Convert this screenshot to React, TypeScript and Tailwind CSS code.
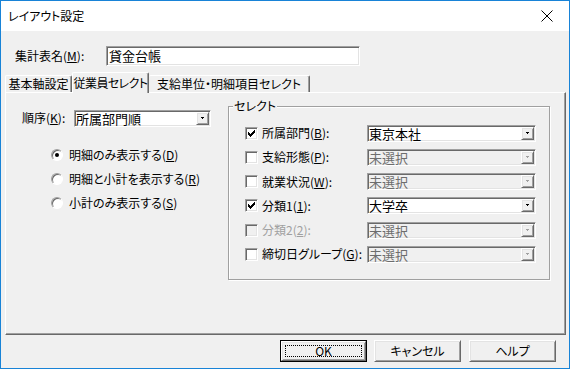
import React from 'react';

const font = "font-['MS_UI_Gothic','Noto_Sans_CJK_JP',sans-serif] [font-feature-settings:'palt']";

const sunken =
  'border border-t-[#a0a0a0] border-l-[#a0a0a0] border-r-white border-b-white shadow-[inset_1px_1px_0_#696969,inset_-1px_-1px_0_#e3e3e3]';
const raised =
  'border border-t-white border-l-white border-r-[#696969] border-b-[#696969] shadow-[inset_1px_1px_0_#e3e3e3,inset_-1px_-1px_0_#a0a0a0]';

const Mn: React.FC<{ k: string; colon?: boolean }> = ({ k, colon = true }) => (
  <>
    (<u className="underline-offset-1">{k}</u>){colon ? ':' : ''}
  </>
);

const Combo: React.FC<{ value: string; disabled?: boolean; className?: string }> = ({ value, disabled, className }) => (
  <div
    className={`${sunken} h-[17px] flex items-stretch ${disabled ? 'bg-[#f0f0f0] text-[#6d6d6d]' : 'bg-white text-black'} ${className ?? ''}`}
  >
    <div className="flex-1 flex items-center pl-[1px] text-[13px] leading-none">{value}</div>
    <div className={`${raised} w-[13px] m-[1px] flex items-center justify-center bg-[#f0f0f0]`}>
      <svg width="5" height="3" viewBox="0 0 5 3">
        <path d="M1 0h3v1h-1v1h-1v-1h-1z" fill={disabled ? '#a0a0a0' : '#000'} />
      </svg>
    </div>
  </div>
);

const Check: React.FC<{ checked?: boolean; disabled?: boolean }> = ({ checked, disabled }) => (
  <div className={`${sunken} w-[13px] h-[13px] flex items-center justify-center ${disabled ? 'bg-[#f0f0f0]' : 'bg-white'}`}>
    {checked && (
      <svg width="7" height="7" viewBox="0 0 7 7">
        <path d="M0 2h1v1h1v1h1v-1h1v-1h1v-1h1v-1h1v3h-1v1h-1v1h-1v1h-1v1h-1v-1h-1v-1h-1v-1h-1z" fill="#000" />
      </svg>
    )}
  </div>
);

const Radio: React.FC<{ checked?: boolean }> = ({ checked }) => (
  <div className="w-[12px] h-[12px] rounded-full border border-t-[#a0a0a0] border-l-[#a0a0a0] border-r-white border-b-white bg-white shadow-[inset_1px_1px_0_#696969] flex items-center justify-center">
    {checked && <div className="w-[4px] h-[4px] rounded-full bg-black" />}
  </div>
);

const rows = [
  { label: '所属部門', k: 'B', value: '東京本社', checked: true },
  { label: '支給形態', k: 'P', value: '未選択', comboOff: true },
  { label: '就業状況', k: 'W', value: '未選択', comboOff: true },
  { label: '分類1', k: '1', value: '大学卒', checked: true },
  { label: '分類2', k: '2', value: '未選択', comboOff: true, off: true },
  { label: '締切日グループ', k: 'G', value: '未選択', comboOff: true },
];

const radios = [
  { label: '明細のみ表示する', k: 'D', checked: true },
  { label: '明細と小計を表示する', k: 'R' },
  { label: '小計のみ表示する', k: 'S' },
];

export default function App() {
  return (
    <div className={`${font} w-[570px] h-[369px] border border-[#1883d7] bg-[#f0f0f0] text-black text-[12px] flex flex-col overflow-hidden`}>
      {/* Title bar */}
      <div className="h-[30px] bg-white flex items-center justify-between pl-[7px] pr-[16px]">
        <span className="text-[12px]">レイアウト設定</span>
        <svg width="12" height="12" viewBox="0 0 12 12">
          <path d="M0.5 0.5L11.5 11.5M11.5 0.5L0.5 11.5" stroke="#000" strokeWidth="1" />
        </svg>
      </div>

      {/* Name row */}
      <div className="flex items-center mt-[15px] ml-[14px]">
        <span className="w-[91px]">
          集計表名<Mn k="M" />
        </span>
        <div className={`${sunken} bg-white w-[254px] h-[20px] flex items-center pl-[2px] text-[13px]`}>貸金台帳</div>
      </div>

      {/* Tabs */}
      <div className="flex items-end ml-[4px] mt-[6px] h-[20px] relative z-10 whitespace-nowrap">
        <div className="h-[17px] w-[67px] flex items-center justify-center border-t border-l border-white border-r border-r-[#696969] rounded-t-[2px] shadow-[inset_-1px_0_0_#a0a0a0]">
          基本軸設定
        </div>
        <div className="h-[21px] w-[77px] -mb-[1px] flex items-center justify-center bg-[#f0f0f0] border-t border-l border-white border-r border-r-[#696969] rounded-t-[2px] shadow-[inset_-1px_0_0_#a0a0a0] tracking-[-0.6px]">
          従業員セレクト
        </div>
        <div className="h-[17px] w-[161px] flex items-center justify-center border-t border-white border-r border-r-[#696969] rounded-t-[2px] shadow-[inset_-1px_0_0_#a0a0a0]">
          支給単位・明細項目セレクト
        </div>
      </div>

      {/* Panel */}
      <div className="ml-[4px] mr-[3px] h-[243px] border-t border-l border-white border-r border-b border-r-[#696969] border-b-[#696969] shadow-[inset_-1px_-1px_0_#a0a0a0] flex">
        <div className="w-[222px] pt-[16px] pl-[16px]">
          <div className="flex items-center">
            <span className="w-[52px]">
              順序<Mn k="K" />
            </span>
            <Combo value="所属部門順" className="w-[137px]" />
          </div>
          <div className="mt-[16px] pl-[29px] flex flex-col">
            {radios.map((r) => (
              <div key={r.k} className="h-[24px] flex items-center gap-[6px]">
                <Radio checked={r.checked} />
                <span>
                  {r.label}
                  <Mn k={r.k} colon={false} />
                </span>
              </div>
            ))}
          </div>
        </div>

        <div className="relative mt-[13px] w-[322px] h-[174px] border border-[#a0a0a0] shadow-[1px_1px_0_#fff,inset_1px_1px_0_#fff] pt-[14px] pl-[16px]">
          <span className="absolute -top-[8px] left-[4px] px-[1px] bg-[#f0f0f0] leading-[14px]">セレクト</span>
          {rows.map((r) => (
            <div key={r.k} className="h-[24.25px] flex items-center">
              <Check checked={r.checked} disabled={r.off} />
              <span className={`ml-[4px] w-[105px] ${r.off ? 'text-[#a0a0a0]' : ''}`}>
                {r.label}
                <Mn k={r.k} />
              </span>
              <Combo value={r.value} disabled={r.comboOff} className="w-[169px]" />
            </div>
          ))}
        </div>
      </div>

      {/* Buttons */}
      <div className="flex justify-end gap-[7px] mt-[5px] pr-[13px]">
        <div className="w-[87px] h-[22px] border border-black">
          <div className={`${raised} h-full p-[3px] bg-[#f0f0f0]`}>
            <div className="h-full border border-dotted border-black flex items-center justify-center">OK</div>
          </div>
        </div>
        <div className={`${raised} w-[87px] h-[22px] flex items-center justify-center bg-[#f0f0f0]`}>キャンセル</div>
        <div className={`${raised} w-[87px] h-[22px] flex items-center justify-center bg-[#f0f0f0] ml-[1px]`}>ヘルプ</div>
      </div>
    </div>
  );
}
